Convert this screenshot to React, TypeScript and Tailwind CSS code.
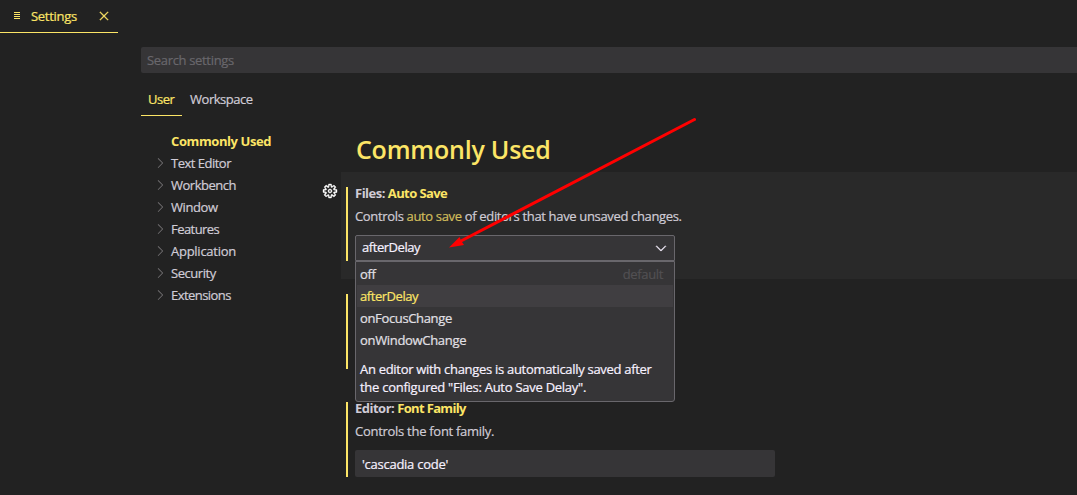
import type { ReactNode } from "react";
import { VscChevronDown, VscChevronRight, VscClose, VscGear } from "react-icons/vsc";

const sections = [
  { label: "Text Editor", tracking: "tracking-[-0.5px]" },
  { label: "Workbench", tracking: "tracking-[-0.5px]" },
  { label: "Window", tracking: "tracking-[-0.4px]" },
  { label: "Features", tracking: "tracking-[-0.55px]" },
  { label: "Application", tracking: "tracking-[-0.26px]" },
  { label: "Security", tracking: "tracking-[-0.45px]" },
  { label: "Extensions", tracking: "tracking-[-0.55px]" },
];

const options = [
  { label: "off", note: "default", style: "text-[#e2e0e6] tracking-[-0.35px]" },
  { label: "afterDelay", note: "", style: "bg-[#403e41] text-[#fce566] tracking-[-0.45px]" },
  { label: "onFocusChange", note: "", style: "text-[#e2e0e6] tracking-[-0.35px]" },
  { label: "onWindowChange", note: "", style: "text-[#e2e0e6] tracking-[-0.32px]" },
];

function EditorTab() {
  return (
    <div className="flex h-[33px] w-[118px] items-center border-b border-[#fce566] text-[#fce566]">
      <svg className="ml-[14px] h-2 w-[7px]" viewBox="0 0 7 8" stroke="currentColor" strokeWidth="1">
        <path d="M0 .5h6M0 2.5h6M0 4.5h6M0 6.5h6" />
      </svg>
      <span className="ml-[10px] w-[65px] tracking-[-0.28px]">Settings</span>
      <VscClose size={16} stroke="currentColor" strokeWidth={0.3} />
    </div>
  );
}

function Setting({ active, children }: { active?: boolean; children?: ReactNode }) {
  return (
    <section className={active ? "relative h-[107px] bg-[#292929] pt-[15px] pl-[5px]" : "h-[108px] pt-[15px] pl-[5px]"}>
      {active && (
        <VscGear size={16} stroke="currentColor" strokeWidth={0.4} className="absolute top-[11px] -left-[19px] text-white" />
      )}
      <div className={active ? "h-[74px] border-l-2 border-[#fce566] pl-[7px]" : "h-[75px] border-l-2 border-[#fce566] pl-[7px]"}>
        {children}
      </div>
    </section>
  );
}

function Dropdown() {
  return (
    <div className="relative mt-[10px] flex h-[26px] w-[320px] items-center justify-between rounded-t-[2px] border border-[#69676c] bg-[#363537] pr-[5px] pl-[6px] text-[#f7f1ff]">
      <span className="pb-[2px] tracking-[-0.45px]">afterDelay</span>
      <VscChevronDown size={16} stroke="currentColor" strokeWidth={0.4} />
      <div className="absolute top-[25px] -left-px z-10 h-[141px] w-[320px] rounded-b-[3px] border border-[#69676c] bg-[#363537] p-px">
        {options.map((o) => (
          <div key={o.label} className={`flex h-[22px] items-center justify-between pr-[10px] pb-px pl-[3px] ${o.style}`}>
            <span>{o.label}</span>
            <span className="text-[#525053]">{o.note}</span>
          </div>
        ))}
        <p className="mt-[9px] pl-[3px] leading-[18px] whitespace-nowrap">
          <span className="tracking-[-0.3px]">An editor with changes is automatically saved after</span>
          <br />
          <span className="tracking-[-0.26px]">the configured "Files: Auto Save Delay".</span>
        </p>
      </div>
    </div>
  );
}

export default function App() {
  return (
    <div className="flex h-[495px] w-[1077px] flex-col overflow-hidden bg-[#222222] font-['Open_Sans','Noto_Sans',sans-serif] text-[13px] leading-[18px] whitespace-nowrap text-[#d0ccd6] [-webkit-text-stroke:0.2px]">
      <EditorTab />
      <header className="mt-[14px] ml-[141px]">
        <div className="flex h-[26px] items-center rounded-l-[2px] bg-[#363537] pb-px pl-[6px] text-[#69676c]">
          <span className="tracking-[-0.33px]">Search settings</span>
        </div>
        <nav className="mt-[10px] flex h-[33px]">
          <span className="w-[41px] border-b border-[#fce566] pt-[7px] pl-[7px] tracking-[-0.5px] text-[#fce566]">User</span>
          <span className="pt-[7px] pl-[8px] tracking-[-0.47px]">Workspace</span>
        </nav>
      </header>
      <main className="flex flex-1">
        <aside className="w-[341px] pt-[14px]">
          <div className="flex h-[22px] items-center pl-[171px] font-bold text-[#fce566] [-webkit-text-stroke:0px]">
            <span className="tracking-[-0.4px]">Commonly Used</span>
          </div>
          {sections.map((s) => (
            <div key={s.label} className="flex h-[22px] items-center pl-[152px]">
              <VscChevronRight size={16} className="mr-[3px] text-[#727072]" />
              <span className={s.tracking}>{s.label}</span>
            </div>
          ))}
        </aside>
        <div className="relative flex-1">
          <h1 className="h-[56px] pt-[16px] pl-[15px] text-[25px] leading-[34px] font-semibold text-[#fce566] [-webkit-text-stroke:0px]">
            <span className="tracking-[-0.22px]">Commonly Used</span>
          </h1>
          <Setting active>
            <h2 className="h-[14px] leading-[12px] font-bold [-webkit-text-stroke:0px]">
              <span className="tracking-[-0.5px]">Files: </span>
              <span className="tracking-[-0.6px] text-[#fce566]">Auto Save</span>
            </h2>
            <p className="mt-[6px] tracking-[-0.34px]">
              Controls <span className="text-[#d2be5c]">auto save</span> of editors that have unsaved changes.
            </p>
            <Dropdown />
          </Setting>
          <Setting />
          <Setting>
            <h2 className="h-[14px] leading-[12px] font-bold [-webkit-text-stroke:0px]">
              <span className="tracking-[-0.5px]">Editor: </span>
              <span className="tracking-[-0.65px] text-[#fce566]">Font Family</span>
            </h2>
            <p className="mt-[6px] tracking-[-0.28px]">Controls the font family.</p>
            <div className="mt-[10px] flex h-[27px] w-[420px] items-center rounded-[2px] bg-[#363537] pt-px pl-[7px] text-[#f7f1ff]">
              <span className="tracking-[-0.26px]">'cascadia code'</span>
            </div>
          </Setting>
          <svg className="pointer-events-none absolute top-0 left-[105px] z-20 h-[140px] w-[260px]" viewBox="446 116 260 140">
            <path d="M694.500 119.500 460 241.500" stroke="#ff0000" strokeWidth="3" strokeLinecap="round" />
            <path d="m449 247.500 10.500-10.500 1.500 3.500 3 4.500z" fill="#ff0000" />
          </svg>
        </div>
      </main>
    </div>
  );
}
